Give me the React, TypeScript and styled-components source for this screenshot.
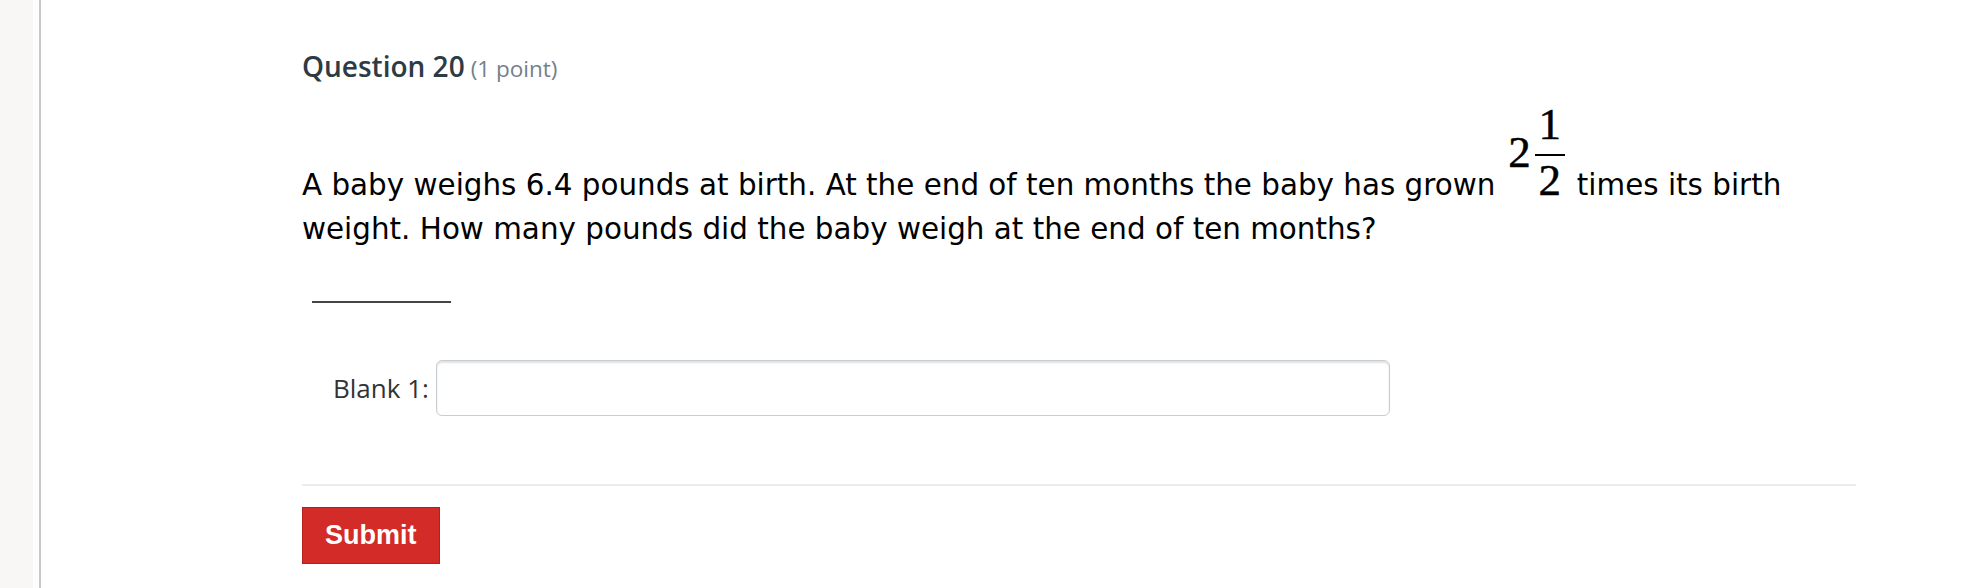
import styled, { createGlobalStyle } from "styled-components";

const GlobalStyle = createGlobalStyle`
  html, body {
    margin: 0;
    padding: 0;
    background: #ffffff;
  }
  body {
    font-family: "Open Sans", "Liberation Sans", sans-serif;
  }
`;

const Page = styled.div`
  display: flex;
  min-height: 588px;
  background: #ffffff;
`;

const Rail = styled.div`
  width: 33px;
  flex-shrink: 0;
  background: #f8f7f6;
  border-right: 6px solid #fdfdfd;
`;

const Main = styled.main`
  flex: 1;
  border-left: 2px solid #c8c8c8;
  padding: 47px 112px 0 261px;
`;

const Header = styled.h2`
  margin: 0;
  font-size: 28px;
  line-height: 38px;
  font-weight: 600;
  color: #2d3b45;
`;

const Points = styled.span`
  margin-left: 6px;
  font-size: 22.5px;
  line-height: 1;
  font-weight: 400;
  color: #73818c;
`;

const QuestionText = styled.p`
  margin: 23px 0 0;
  font-family: "DejaVu Sans", Verdana, sans-serif;
  font-size: 29.4px;
  line-height: 44px;
  color: #000000;
`;

const Mixed = styled.span`
  display: inline-flex;
  align-items: center;
  vertical-align: 28px;
  margin: 0 12px 0 13px;
  font-family: "Liberation Serif", "DejaVu Serif", serif;
  font-size: 45px;
  line-height: 32px;
  -webkit-text-stroke: 0.5px #000000;
`;

const Whole = styled.span`
  display: block;
  line-height: 32px;
`;

const Frac = styled.span`
  display: flex;
  flex-direction: column;
  align-items: center;
  margin-left: 4px;
`;

const Digit = styled.span<{ $gap?: string }>`
  display: block;
  line-height: 32px;
  margin: ${(p) => p.$gap ?? "0"};
`;

const Bar = styled.span`
  display: block;
  width: 30px;
  height: 2px;
  background: #000000;
`;

const BlankLine = styled.div`
  width: 139px;
  height: 2px;
  margin: 50px 0 0 10px;
  background: #444444;
`;

const AnswerRow = styled.div`
  display: flex;
  align-items: center;
  gap: 7px;
  margin: 57px 0 0 31px;
`;

const Label = styled.label`
  font-size: 26px;
  line-height: 36px;
  font-weight: 500;
  color: #333333;
`;

const TextInput = styled.input`
  width: 954px;
  height: 56px;
  box-sizing: border-box;
  border: 1px solid #c7cdd1;
  border-radius: 6px;
  box-shadow: inset 0 2px 2px rgba(0, 0, 0, 0.12);
  background: #ffffff;
  padding: 0 12px;
  font-size: 24px;
  outline: none;
`;

const Separator = styled.hr`
  margin: 68px 0 0;
  border: none;
  height: 2px;
  background: #ebebeb;
`;

const SubmitButton = styled.button`
  margin-top: 21px;
  height: 57px;
  padding: 0 22px;
  border: 1px solid #b3201f;
  background: #d22b28;
  color: #ffffff;
  font-family: "Liberation Sans", Arial, sans-serif;
  font-weight: 700;
  font-size: 27px;
  cursor: pointer;
`;

export default function App() {
  return (
    <>
      <GlobalStyle />
      <Page>
        <Rail />
        <Main>
          <Header>
            Question 20<Points>(1 point)</Points>
          </Header>
          <QuestionText>
            A baby weighs 6.4 pounds at birth. At the end of ten months the baby has grown
            <Mixed>
              <Whole>2</Whole>
              <Frac>
                <Digit $gap="0 0 14px">1</Digit>
                <Bar />
                <Digit $gap="8px 0 0">2</Digit>
              </Frac>
            </Mixed>
            times its birth weight. How many pounds did the baby weigh at the end of ten months?
          </QuestionText>
          <BlankLine />
          <AnswerRow>
            <Label htmlFor="blank1">Blank 1:</Label>
            <TextInput id="blank1" type="text" />
          </AnswerRow>
          <Separator />
          <SubmitButton>Submit</SubmitButton>
        </Main>
      </Page>
    </>
  );
}
